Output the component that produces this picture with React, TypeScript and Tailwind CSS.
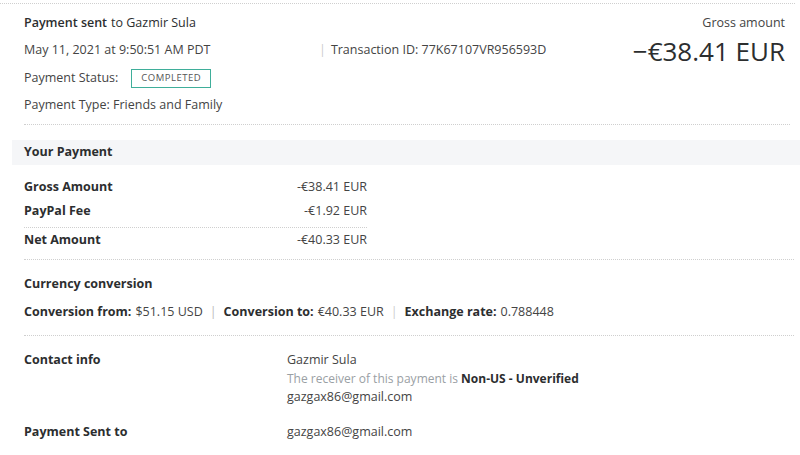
import React from "react";

const font = { fontFamily: '"Open Sans", "Noto Sans", "Liberation Sans", sans-serif' };

function Row({ label, value }: { label: string; value: string }) {
  return (
    <div className="flex items-center h-[24px]">
      <div className="w-[240px] font-bold text-[#2c2e2f]">{label}</div>
      <div className="w-[103px] text-right text-[#444]">{value}</div>
    </div>
  );
}

export default function App() {
  return (
    <div className="w-[800px] h-[455px] bg-white overflow-hidden text-[12.5px] text-[#2c2e2f]" style={font}>
      <div className="mt-[3px] border-t border-dotted border-[#cfcfcf] w-[795px]" />
      <div className="pl-6 pr-[15px] pt-[6px] flex">
        <div className="flex-1">
          <div className="h-[27px] flex items-center">
            <span className="font-semibold">Payment sent</span>
            <span className="ml-1">to Gazmir Sula</span>
          </div>
          <div className="h-[27px] flex items-center text-[#444]">
            <span className="w-[295px]">May 11, 2021 at 9:50:51 AM PDT</span>
            <span className="text-[#ccc] mr-[5px]">|</span>
            <span>Transaction ID: 77K67107VR956593D</span>
          </div>
          <div className="h-[28px] flex items-center text-[#444]">
            <span>Payment Status:</span>
            <span className="ml-[13px] border border-[#3fae9a] px-[9px] h-[19px] flex items-center text-[9.5px] tracking-[0.5px] text-[#555]">
              COMPLETED
            </span>
          </div>
          <div className="h-[27px] flex items-center text-[#444]">Payment Type: Friends and Family</div>
        </div>
        <div className="flex flex-col items-end">
          <div className="h-[27px] flex items-center text-[#444]">Gross amount</div>
          <div className="text-[26px] leading-[30px] text-[#2c2e2f] -mt-[1px]">−€38.41 EUR</div>
        </div>
      </div>
      <div className="ml-6 mt-[5px] border-t border-dotted border-[#cfcfcf] w-[766px]" />
      <div className="ml-3 mt-[15px] h-[25px] bg-[#f5f6f8] pl-3 flex items-center font-bold">Your Payment</div>
      <div className="pl-6 pt-[10px]">
        <Row label="Gross Amount" value="-€38.41 EUR" />
        <Row label="PayPal Fee" value="-€1.92 EUR" />
        <div className="mt-[4px] border-t border-dotted border-[#cfcfcf] w-[343px]" />
        <Row label="Net Amount" value="-€40.33 EUR" />
      </div>
      <div className="ml-6 mt-[7px] border-t border-dotted border-[#cfcfcf] w-[770px]" />
      <div className="pl-6 pt-[12px]">
        <div className="h-[24px] flex items-center font-bold">Currency conversion</div>
        <div className="h-[32px] flex items-center text-[#444]">
          <span className="font-bold text-[#2c2e2f]">Conversion from:</span>
          <span className="ml-1">$51.15 USD</span>
          <span className="mx-[7px] text-[#bbb]">|</span>
          <span className="font-bold text-[#2c2e2f]">Conversion to:</span>
          <span className="ml-1">€40.33 EUR</span>
          <span className="mx-[7px] text-[#ccc]">|</span>
          <span className="font-bold text-[#2c2e2f]">Exchange rate:</span>
          <span className="ml-1">0.788448</span>
        </div>
      </div>
      <div className="ml-6 mt-[7px] border-t border-dotted border-[#cfcfcf] w-[770px]" />
      <div className="pl-6 pt-[14px] flex">
        <div className="w-[263px] font-bold h-[20px] flex items-center">Contact info</div>
        <div className="text-[#444]">
          <div className="h-[20px] flex items-center">Gazmir Sula</div>
          <div className="h-[18px] flex items-center text-[12px] text-[#9aa0a4]">
            The receiver of this payment is&nbsp;<span className="font-bold text-[#2c2e2f]">Non-US - Unverified</span>
          </div>
          <div className="h-[18px] flex items-center">gazgax86@gmail.com</div>
        </div>
      </div>
      <div className="pl-6 pt-[16px] flex">
        <div className="w-[263px] font-bold h-[20px] flex items-center">Payment Sent to</div>
        <div className="h-[20px] flex items-center text-[#444]">gazgax86@gmail.com</div>
      </div>
    </div>
  );
}
